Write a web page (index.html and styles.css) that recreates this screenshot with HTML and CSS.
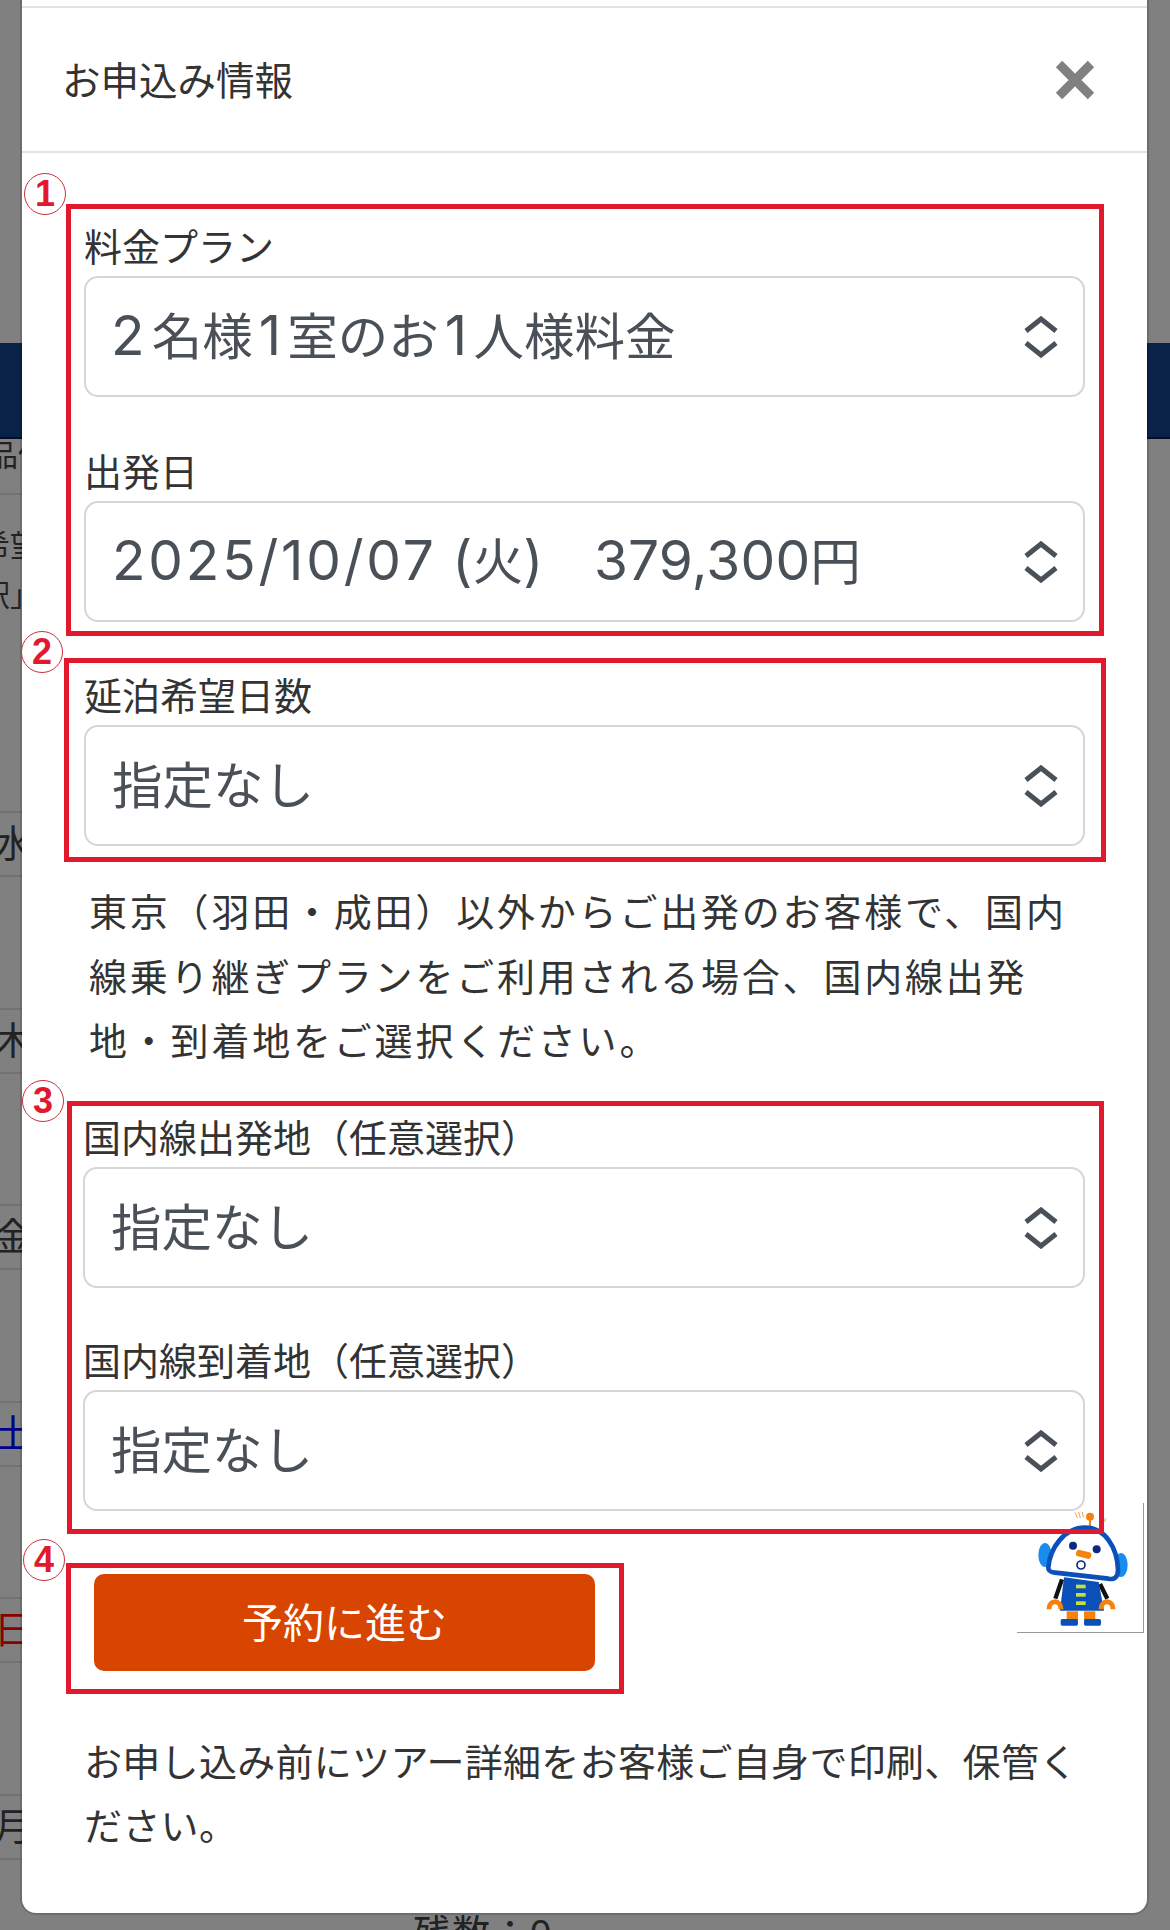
FILE: index.html
```html
<!DOCTYPE html>
<html lang="ja">
<head>
    <meta charset="UTF-8">
    <meta name="viewport" content="width=device-width, initial-scale=1.0">
    <title>お申込み情報</title>
    <link rel="stylesheet" href="styles.css">
</head>
<body>

<!-- page behind the modal, dimmed -->
<div class="page">
    <div class="band"></div>
    <div class="info-row">品価</div>
    <div class="info-note">希望<br>駅」</div>
    <div class="days">
        <div class="day">水</div>
        <div class="day">木</div>
        <div class="day">金</div>
        <div class="day sat">土</div>
        <div class="day sun">日</div>
        <div class="day">月</div>
    </div>
    <div class="stock">残数：0</div>
</div>

<div class="modal">
    <div class="modal-prev"></div>
    <div class="modal-header">
        <span class="modal-title">お申込み情報</span>
        <svg class="close" width="40" height="40" viewBox="0 0 40 40">
            <path d="M4 4 L36 36 M36 4 L4 36" stroke="#808080" stroke-width="9" fill="none"/>
        </svg>
    </div>

    <div class="robot">
        <svg width="126" height="129" viewBox="51 39 378 387">
            <path d="M226 68 l6 16 M236 66 l5 18 M247 66 l3 16 M306 80 l-2 16 M316 84 l-2 12" stroke="#f5a04a" stroke-width="3" fill="none"/>
            <path d="M270 82 V112" stroke="#f5820f" stroke-width="6"/>
            <circle cx="270" cy="80" r="12" fill="#f5820f"/>
            <ellipse cx="135" cy="195" rx="20" ry="36" fill="#1a8cf0"/>
            <ellipse cx="363" cy="225" rx="20" ry="36" fill="#1a8cf0"/>
            <path d="M186 268 L166 326 M300 282 L322 326" stroke="#111" stroke-width="13"/>
            <path d="M192 262 L296 276 L312 362 L180 362 Z" fill="#0b50b8"/>
            <path d="M145 232 C150 175 192 113 255 113 C315 113 352 172 354 240 C354 262 342 270 325 266 L165 248 C150 246 144 242 145 232 Z" fill="#fff" stroke="#0b50b8" stroke-width="14"/>
            <circle cx="219" cy="167" r="12" fill="#0a2a80"/>
            <circle cx="290" cy="178" r="12" fill="#0a2a80"/>
            <rect x="228" y="183" width="46" height="20" rx="8" transform="rotate(14 251 193)" fill="#f5820f"/>
            <circle cx="243" cy="225" r="12" fill="#fff" stroke="#0a2a80" stroke-width="5"/>
            <rect x="228" y="284" width="29" height="11" fill="#c4e03c"/>
            <rect x="228" y="309" width="29" height="11" fill="#c4e03c"/>
            <rect x="228" y="334" width="29" height="11" fill="#c4e03c"/>
            <path d="M147 358 C147 328 183 328 183 358 M303 358 C303 328 339 328 339 358" stroke="#f5820f" stroke-width="15" fill="none"/>
            <rect x="200" y="364" width="34" height="26" fill="#f5820f"/>
            <rect x="252" y="364" width="34" height="26" fill="#f5820f"/>
            <rect x="182" y="387" width="52" height="20" rx="5" fill="#0b50b8"/>
            <rect x="252" y="387" width="51" height="20" rx="5" fill="#0b50b8"/>
        </svg>
    </div>

    <div class="mark-box box-plan">
        <span class="badge">1</span>
        <div class="field">
            <div class="field-label">料金プラン</div>
            <div class="select">
                <span class="select-text"><span class="num first-digit">2</span>名様<span class="num digit">1</span>室のお<span class="num digit">1</span>人様料金</span>
                <svg width="36" height="42" viewBox="0 0 36 42"><path d="M3 15 L18 3 L33 15 M3 27 L18 39 L33 27" stroke="#495057" stroke-width="5" fill="none"/></svg>
            </div>
        </div>
        <div class="field">
            <div class="field-label">出発日</div>
            <div class="select">
                <span class="select-text"><span class="num date">2025/10/07</span><span class="num"> (</span>火<span class="num">)</span>　<span class="num">379,300</span>円</span>
                <svg width="36" height="42" viewBox="0 0 36 42"><path d="M3 15 L18 3 L33 15 M3 27 L18 39 L33 27" stroke="#495057" stroke-width="5" fill="none"/></svg>
            </div>
        </div>
    </div>

    <div class="mark-box box-stay">
        <span class="badge">2</span>
        <div class="field">
            <div class="field-label">延泊希望日数</div>
            <div class="select">
                <span class="select-text">指定なし</span>
                <svg width="36" height="42" viewBox="0 0 36 42"><path d="M3 15 L18 3 L33 15 M3 27 L18 39 L33 27" stroke="#495057" stroke-width="5" fill="none"/></svg>
            </div>
        </div>
    </div>

    <p class="note">東京（羽田・成田）以外からご出発のお客様で、国内<br>線乗り継ぎプランをご利用される場合、国内線出発<br>地・到着地をご選択ください。</p>

    <div class="mark-box box-domestic">
        <span class="badge">3</span>
        <div class="field">
            <div class="field-label">国内線出発地（任意選択）</div>
            <div class="select">
                <span class="select-text">指定なし</span>
                <svg width="36" height="42" viewBox="0 0 36 42"><path d="M3 15 L18 3 L33 15 M3 27 L18 39 L33 27" stroke="#495057" stroke-width="5" fill="none"/></svg>
            </div>
        </div>
        <div class="field">
            <div class="field-label">国内線到着地（任意選択）</div>
            <div class="select">
                <span class="select-text">指定なし</span>
                <svg width="36" height="42" viewBox="0 0 36 42"><path d="M3 15 L18 3 L33 15 M3 27 L18 39 L33 27" stroke="#495057" stroke-width="5" fill="none"/></svg>
            </div>
        </div>
    </div>

    <div class="mark-box box-submit">
        <span class="badge">4</span>
        <button class="submit">予約に進む</button>
    </div>

    <p class="print-note">お申し込み前にツアー詳細をお客様ご自身で印刷、保管く<br>ださい。</p>
</div>

</body>
</html>
```

FILE: styles.css
```css
html, body {
    margin: 0;
    padding: 0;
}
body {
    font-family: "Liberation Sans", "Noto Sans CJK JP", sans-serif;
    color: #333;
    position: relative;
    height: 1930px;
    overflow: hidden;
}

/* dimmed page behind */
.page {
    height: 1930px;
    box-sizing: border-box;
    padding-top: 343px;
    background-color: #808080;
    color: #222;
    overflow: hidden;
}
.band {
    height: 94px;
    background-color: #0a2248;
    border-bottom: 2px solid #050f24;
}
.info-row {
    height: 56px;
    box-sizing: border-box;
    margin-left: -12px;
    width: 116px;
    font-size: 30px;
    line-height: 34px;
    border-bottom: 2px solid #727272;
}
.info-note {
    margin-left: -20px;
    padding-top: 26px;
    height: 316px;
    box-sizing: border-box;
    font-size: 30px;
    line-height: 50px;
}
.days {
    display: flex;
    flex-direction: column;
    gap: 130.5px;
}
.day {
    width: 100px;
    height: 66px;
    box-sizing: border-box;
    border-top: 2px solid #727272;
    border-bottom: 2px solid #727272;
    font-size: 38px;
    line-height: 62px;
    text-indent: -6px;
}
.sat {
    color: #00008b;
}
.sun {
    color: #8b0000;
}
.stock {
    margin-top: 53px;
    padding-left: 413px;
    font-size: 38px;
    line-height: 42px;
    letter-spacing: 1px;
}

/* modal */
.modal {
    position: absolute;
    top: 0;
    left: 22px;
    width: 1125px;
    height: 1913px;
    background-color: #fff;
    border-radius: 0 0 14px 14px;
    box-shadow: 0 0 0 2px rgba(0, 0, 0, 0.15);
}
.modal-prev {
    height: 6px;
    border-bottom: 2px solid #e2e2e2;
}
.modal-header {
    height: 145px;
    box-sizing: border-box;
    display: flex;
    align-items: center;
    justify-content: space-between;
    padding: 0 52px 0 40px;
    border-bottom: 2px solid #e2e2e2;
}
.modal-title {
    font-size: 38.5px;
    margin-bottom: 4px;
}
.robot {
    position: absolute;
    left: 995px;
    top: 1503px;
    width: 126px;
    height: 129px;
    border-right: 1px solid #999;
    border-bottom: 1px solid #999;
}
.robot svg {
    display: block;
}

/* red marks */
.mark-box {
    position: relative;
    box-sizing: border-box;
    border: 5px solid #e2192c;
}
.badge {
    position: absolute;
    width: 42px;
    height: 42px;
    box-sizing: border-box;
    border: 1.5px solid #c8323c;
    border-radius: 50%;
    background-color: #fff;
    color: #e2192c;
    font-size: 36px;
    font-weight: bold;
    line-height: 39px;
    text-align: center;
}
.box-plan {
    margin: 51px 0 0 44px;
    width: 1038px;
    height: 432px;
    padding: 17px 14px 0 13px;
}
.box-plan .badge {
    left: -47px;
    top: -36px;
}
.box-stay {
    margin: 22px 0 0 42px;
    width: 1042px;
    height: 204px;
    padding: 12px 16px 0 15px;
}
.box-stay .badge {
    left: -48px;
    top: -32px;
}
.box-domestic {
    margin: 0 0 0 45px;
    width: 1037px;
    height: 433px;
    padding: 11px 14px 0 11px;
}
.box-domestic .badge {
    left: -50px;
    top: -26px;
}
.box-submit {
    margin: 29px 0 0 44px;
    width: 558px;
    height: 131px;
    padding: 6px 0 0 23px;
}
.box-submit .badge {
    left: -48px;
    top: -29px;
}
.field {
    margin-bottom: 54px;
}
.box-domestic .field {
    margin-bottom: 52px;
}
.field-label {
    font-size: 38px;
    line-height: 44px;
    margin-bottom: 6px;
    color: #333;
}
.select {
    height: 121px;
    box-sizing: border-box;
    display: flex;
    align-items: center;
    justify-content: space-between;
    padding: 0 24px 0 26px;
    border: 2px solid #d6d6d6;
    border-radius: 14px;
    background-color: #fff;
    color: #495057;
    font-size: 50.5px;
}
.select-text {
    margin-top: 2px;
    line-height: 60px;
}
.num {
    font-family: Inter, "Liberation Sans", sans-serif;
    font-size: 55px;
    letter-spacing: 0.2px;
    line-height: 1;
}
.date {
    letter-spacing: 2.8px;
}
.first-digit {
    margin: 0 7px 0 -1px;
}
.digit {
    margin: 0 6px;
}
.note {
    margin: 0;
    height: 239px;
    box-sizing: border-box;
    padding: 19px 0 0 67px;
    font-size: 38px;
    line-height: 64.5px;
    letter-spacing: 2.8px;
    white-space: nowrap;
}
.submit {
    display: block;
    width: 501px;
    height: 97px;
    padding: 0 0 6px;
    border: none;
    border-radius: 10px;
    background-color: #d84500;
    color: #fff;
    font-family: inherit;
    font-size: 41px;
}
.print-note {
    margin: 37px 0 0 62px;
    font-size: 38px;
    line-height: 64px;
    letter-spacing: 0.3px;
    white-space: nowrap;
}
```
